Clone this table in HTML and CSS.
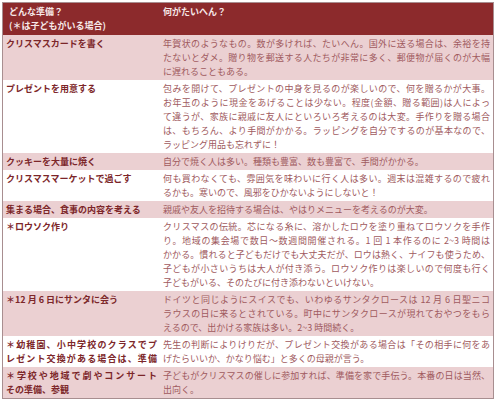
FILE: index.html
```html
<!DOCTYPE html>
<html lang="ja">
<head>
<meta charset="utf-8">
<title>クリスマスの準備</title>
<link rel="stylesheet" href="styles.css">
</head>
<body>
<table class="prep">
  <thead>
    <tr>
      <th class="c1">どんな準備？<br>(＊は子どもがいる場合)</th>
      <th class="c2">何がたいへん？</th>
    </tr>
  </thead>
  <tbody>
    <tr class="pink">
      <td class="c1">クリスマスカードを書く</td>
      <td class="c2"><span class="l">年賀状のようなもの。数が多ければ、たいへん。国外に送る場合は、余裕を持</span><span class="l">たないとダメ。贈り物を郵送する人たちが非常に多く、郵便物が届くのが大幅</span><span class="e">に遅れることもある。</span></td>
    </tr>
    <tr class="white">
      <td class="c1">プレゼントを用意する</td>
      <td class="c2"><span class="l">包みを開けて、プレゼントの中身を見るのが楽しいので、何を贈るかが大事。</span><span class="l">お年玉のように現金をあげることは少ない。程度(金額、贈る範囲)は人によっ</span><span class="l">て違うが、家族に親戚に友人にといろいろ考えるのは大変。手作りを贈る場合</span><span class="l">は、もちろん、より手間がかかる。ラッピングを自分でするのが基本なので、</span><span class="e">ラッピング用品も忘れずに！</span></td>
    </tr>
    <tr class="pink">
      <td class="c1">クッキーを大量に焼く</td>
      <td class="c2"><span class="e">自分で焼く人は多い。種類も豊富、数も豊富で、手間がかかる。</span></td>
    </tr>
    <tr class="white">
      <td class="c1">クリスマスマーケットで過ごす</td>
      <td class="c2"><span class="l">何も買わなくても、雰囲気を味わいに行く人は多い。週末は混雑するので疲れ</span><span class="e">るかも。寒いので、風邪をひかないようにしないと！</span></td>
    </tr>
    <tr class="pink">
      <td class="c1">集まる場合、食事の内容を考える</td>
      <td class="c2"><span class="e">親戚や友人を招待する場合は、やはりメニューを考えるのが大変。</span></td>
    </tr>
    <tr class="white">
      <td class="c1">＊ロウソク作り</td>
      <td class="c2"><span class="l">クリスマスの伝統。芯になる糸に、溶かしたロウを塗り重ねてロウソクを手作</span><span class="l">り。地域の集会場で数日～数週間開催される。1 回 1 本作るのに 2~3 時間は</span><span class="l">かかる。慣れると子どもだけでも大丈夫だが、ロウは熱く、ナイフも使うため、</span><span class="l">子どもが小さいうちは大人が付き添う。ロウソク作りは楽しいので何度も行く</span><span class="e">子どもがいる、そのたびに付き添わないといけない。</span></td>
    </tr>
    <tr class="pink">
      <td class="c1">＊12 月 6 日にサンタに会う</td>
      <td class="c2"><span class="l">ドイツと同じようにスイスでも、いわゆるサンタクロースは 12 月 6 日聖ニコ</span><span class="l">ラウスの日に来るとされている。町中にサンタクロースが現れておやつをもら</span><span class="e">えるので、出かける家族は多い。2~3 時間続く。</span></td>
    </tr>
    <tr class="white">
      <td class="c1"><span class="l">＊幼稚園、小中学校のクラスでプ</span><span class="l">レゼント交換がある場合は、準備</span></td>
      <td class="c2"><span class="l">先生の判断によりけりだが、プレゼント交換がある場合は「その相手に何をあ</span><span class="e">げたらいいか、かなり悩む」と多くの母親が言う。</span></td>
    </tr>
    <tr class="pink">
      <td class="c1"><span class="l">＊学校や地域で劇やコンサート</span><span class="e">その準備、参観</span></td>
      <td class="c2"><span class="l">子どもがクリスマスの催しに参加すれば、準備を家で手伝う。本番の日は当然、</span><span class="e">出向く。</span></td>
    </tr>
  </tbody>
</table>
</body>
</html>
```

FILE: styles.css
```css
html, body {
  margin: 0;
  padding: 0;
  background: #ffffff;
}

body {
  font-family: "Noto Sans CJK JP", "Noto Sans", sans-serif;
  font-size: 9px;
  line-height: 14px;
}

.prep {
  margin: 2px 0 0 2px;
  width: 492px;
  border-collapse: collapse;
  border: 1px solid #a88e90;
  table-layout: fixed;
}

.prep th,
.prep td {
  vertical-align: top;
  text-align: left;
  padding: 2px 3px 1px 3px;
}

.prep td.c1 {
  width: 151px;
}

.prep th {
  background: #8c2a2c;
  color: #f6e8e8;
  font-weight: bold;
  padding: 2px 3px 2px 3px;
}

.prep th.c1 {
  padding-left: 6px;
  width: 148px;
}

.prep td.c1 {
  font-weight: bold;
  color: #7c2629;
}

.prep td.c2 {
  color: #a05a5e;
}

.prep tr.pink td {
  background: #ebd0d2;
}

.prep tr.white td {
  background: #ffffff;
}

.l {
  display: block;
  white-space: nowrap;
  text-align: justify;
  text-align-last: justify;
}

.e {
  display: block;
  white-space: nowrap;
}
```
